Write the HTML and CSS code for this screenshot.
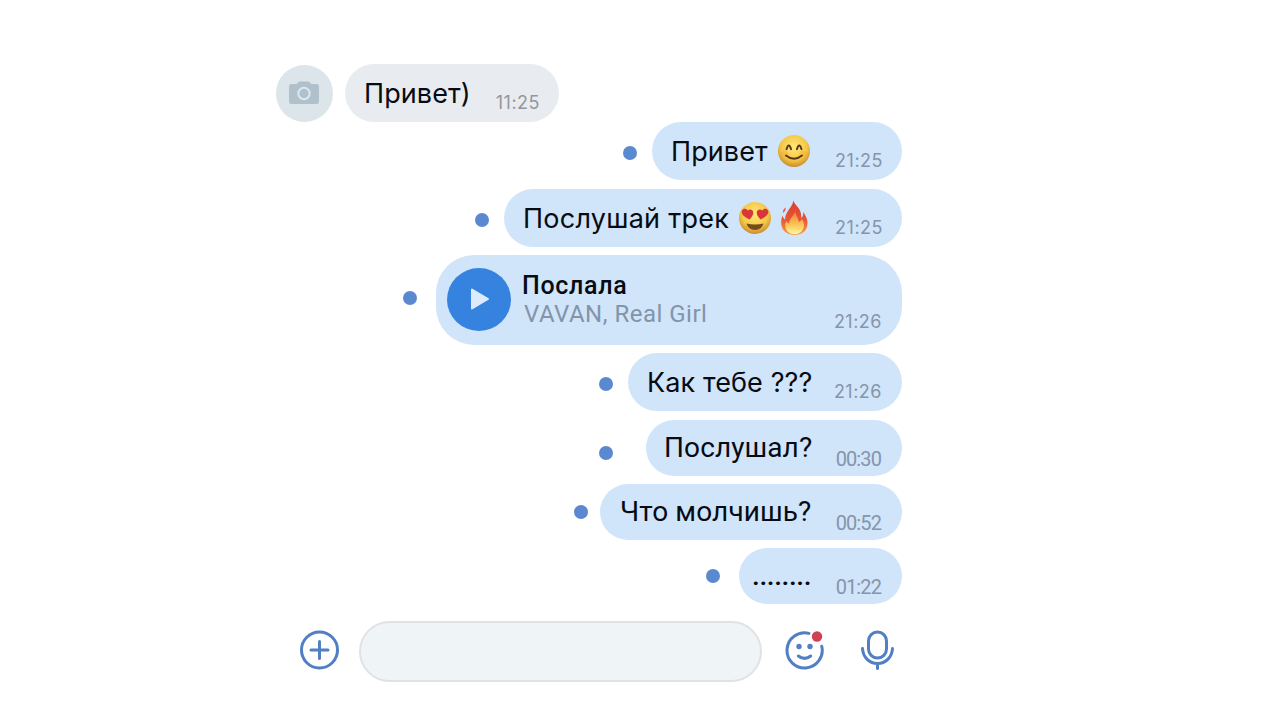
FILE: index.html
```html
<!DOCTYPE html>
<html lang="ru">
<head>
    <meta charset="UTF-8">
    <meta name="viewport" content="width=device-width, initial-scale=1.0">
    <title>Сообщения</title>
    <link rel="stylesheet" href="styles.css">
</head>
<body>
    <main class="chat">
        <div class="message incoming">
            <div class="avatar">
                <svg width="32" height="26" viewBox="0 0 32 26">
                    <path d="M3.500 4H8q1.200 0 2-1.500.8-1 2-1h8q1.200 0 2 1Q22.800 4 24 4h4.500q2.500 0 2.500 2.500v15q0 2.500-2.500 2.500h-25Q1 24 1 21.500v-15Q1 4 3.500 4z" fill="#b0c1cc"/>
                    <circle cx="16" cy="13.500" r="5.700" fill="none" stroke="#dce8ef" stroke-width="2"/>
                </svg>
            </div>
            <div class="bubble hello-in">
                <span class="text">Привет)</span>
                <span class="time">11:25</span>
            </div>
        </div>

        <div class="message">
            <span class="dot"></span>
            <div class="bubble hello-out">
                <span class="text">Привет</span>
                <svg class="emoji" width="34" height="34" viewBox="0 0 34 34">
                    <defs>
                        <radialGradient id="face" cx="50%" cy="38%" r="62%">
                            <stop offset="0" stop-color="#ffe978"/>
                            <stop offset=".65" stop-color="#f5c846"/>
                            <stop offset="1" stop-color="#c98b2c"/>
                        </radialGradient>
                    </defs>
                    <circle cx="17" cy="17" r="16" fill="url(#face)"/>
                    <ellipse cx="7.500" cy="20" rx="4" ry="3" fill="#f4a53b" opacity=".4"/>
                    <ellipse cx="26.500" cy="20" rx="4" ry="3" fill="#f4a53b" opacity=".4"/>
                    <path d="M9.500 15.200q2.300-7.500 4.600 0M19.900 15.200q2.300-7.500 4.600 0M9 21.500q8 6.500 16 0" fill="none" stroke="#573719" stroke-width="1.900" stroke-linecap="round"/>
                </svg>
                <span class="time">21:25</span>
            </div>
        </div>

        <div class="message">
            <span class="dot"></span>
            <div class="bubble listen">
                <span class="text">Послушай трек</span>
                <svg class="emoji" width="34" height="34" viewBox="0 0 34 34">
                    <circle cx="17" cy="17" r="16" fill="url(#face)"/>
                    <path d="M11.500 18.500C6 16 2.500 12.500 4 9.500c1.300-2.500 4.500-2.300 5.700.1 2-2.100 5-1.300 5.500 1.300.5 2.600-1.400 5.100-3.700 7.600z" fill="#d9363c"/>
                    <path d="M22.500 18.500C28 16 31.500 12.500 30 9.500c-1.300-2.500-4.500-2.300-5.700.1-2-2.100-5-1.300-5.500 1.300-.5 2.600 1.400 5.100 3.700 7.600z" fill="#d9363c"/>
                    <path d="M8.500 22.500q8.500 2 17 0-1.700 6.500-8.500 6.500t-8.500-6.500z" fill="#754b1e"/>
                </svg>
                <svg class="fire" width="30" height="36" viewBox="0 0 30 36">
                    <defs>
                        <linearGradient id="flame" x1="0" y1="0" x2="0" y2="1">
                            <stop offset="0" stop-color="#dc3c2d"/>
                            <stop offset=".55" stop-color="#e65636"/>
                            <stop offset="1" stop-color="#f6a044"/>
                        </linearGradient>
                        <linearGradient id="flameCore" x1="0" y1="0" x2="0" y2="1">
                            <stop offset="0" stop-color="#ee7a3a"/>
                            <stop offset=".6" stop-color="#fbc656"/>
                            <stop offset="1" stop-color="#fff6a6"/>
                        </linearGradient>
                    </defs>
                    <path d="M13.500.5c1 4.500 7 7.500 7.500 13.500.2 1.700.2 3 .2 4 1.700-.8 2.300-3.500 1.900-6 3.600 5 5.200 9 4.200 13.500C26 31.500 21.500 35 14.800 35 7 35 2 30.500 1.300 24.500.9 21 1.500 18 2.500 15.500c.6 2 1.300 3.500 2.700 4C5 15 7.500 11.500 10 8c1.700-2.500 3-4.500 3.500-7.500z" fill="url(#flame)"/>
                    <path d="M5.300 7.500c1 2-.5 4-2.300 5.500-.4-2 .6-4 2.300-5.500z" fill="#e25b4a"/>
                    <path d="M15.500 11c-.4 4 2.800 6.500 3.300 11 1.700-.4 2.600-1.600 3-3.200 2.600 3.700 3 7.700 1 10.900-1.700 2.900-4.600 4.500-8.100 4.500-4.700 0-8.400-2.700-9.200-6.700-.5-2.500.1-4.500 1-6.500.5 1.700 1.400 2.500 2.700 2.500-.2-5 4.700-7.500 6.300-12.500z" fill="url(#flameCore)"/>
                </svg>
                <span class="time">21:25</span>
            </div>
        </div>

        <div class="message">
            <span class="dot dot-track"></span>
            <div class="bubble track">
                <div class="play">
                    <svg width="20" height="24" viewBox="0 0 20 24">
                        <path d="M2 2.500v19L18 12z" fill="#dcecfc" stroke="#dcecfc" stroke-width="2" stroke-linejoin="round"/>
                    </svg>
                </div>
                <div class="track-info">
                    <div class="track-title">Послала</div>
                    <div class="track-artist">VAVAN, Real Girl</div>
                </div>
                <span class="time">21:26</span>
            </div>
        </div>

        <div class="message last-seen">
            <span class="dot"></span>
            <div class="bubble how">
                <span class="text">Как тебе ???</span>
                <span class="time">21:26</span>
            </div>
        </div>

        <div class="message">
            <span class="dot dot-listened"></span>
            <div class="bubble small listened">
                <span class="text">Послушал?</span>
                <span class="time">00:30</span>
            </div>
        </div>

        <div class="message">
            <span class="dot dot-silent"></span>
            <div class="bubble small silent">
                <span class="text">Что молчишь?</span>
                <span class="time">00:52</span>
            </div>
        </div>

        <div class="message">
            <span class="dot dot-dots"></span>
            <div class="bubble small dots">
                <span class="text">........</span>
                <span class="time">01:22</span>
            </div>
        </div>

        <div class="composer">
            <svg class="attach" width="40" height="40" viewBox="0 0 40 40" fill="none" stroke="#527fc4" stroke-width="3" stroke-linecap="round">
                <circle cx="19.500" cy="20" r="18"/>
                <path d="M19.500 11.500v17M11 20h17"/>
            </svg>
            <div class="field"></div>
            <svg class="smile" width="40" height="42" viewBox="0 0 40 42">
                <path d="M24 4.400A17.600 17.600 0 1 0 36.700 17.200" fill="none" stroke="#527fc4" stroke-width="3" stroke-linecap="round"/>
                <circle cx="14" cy="17.500" r="2.700" fill="#527fc4"/>
                <circle cx="25" cy="17.500" r="2.700" fill="#527fc4"/>
                <path d="M13.300 27q6.200 4.800 12.400 0" fill="none" stroke="#527fc4" stroke-width="3" stroke-linecap="round"/>
                <circle cx="32" cy="7.500" r="5.200" fill="#cf4153"/>
            </svg>
            <svg class="mic" width="34" height="40" viewBox="0 0 34 40" fill="none" stroke="#527fc4" stroke-width="3" stroke-linecap="round">
                <rect x="7.500" y="2" width="18" height="26" rx="9"/>
                <path d="M1.500 18.500c.5 9 7 15 15 15s14.500-6 15-15M16.500 34v4.500"/>
            </svg>
        </div>
    </main>
</body>
</html>
```

FILE: styles.css
```css
body {
    margin: 0;
    background-color: #fff;
    color: #070b12;
    font-family: Inter, sans-serif;
}
.chat {
    width: 626px;
    height: 656px;
    margin-left: 276px;
    padding-top: 64px;
    overflow: hidden;
}
.message {
    display: flex;
    justify-content: flex-end;
    align-items: center;
    margin-bottom: 8px;
}
.message.incoming {
    justify-content: flex-start;
    margin-bottom: 0;
}
.avatar {
    display: flex;
    align-items: center;
    justify-content: center;
    width: 57px;
    height: 57px;
    margin-right: 12px;
    padding-right: 1px;
    box-sizing: border-box;
    border-radius: 50%;
    background-color: #dce5ea;
}
.bubble {
    display: flex;
    align-items: center;
    box-sizing: border-box;
    height: 58px;
    padding: 0 19px;
    border-radius: 29px;
    background-color: #d0e4fa;
    white-space: nowrap;
}
.text {
    padding-top: 2px;
    font-size: 27px;
    line-height: 56px;
    letter-spacing: 0.1px;
}
.time {
    align-self: flex-end;
    margin-left: auto;
    margin-bottom: 8px;
    color: #8595aa;
    font-size: 18px;
    line-height: 22px;
    letter-spacing: 0.5px;
}
.dot {
    width: 14px;
    height: 14px;
    margin-right: 15px;
    margin-top: 3px;
    border-radius: 50%;
    background-color: #5b89d0;
}
.dot-track {
    margin-right: 19px;
    margin-top: -4px;
}
.dot-listened {
    margin-right: 33px;
    margin-top: 10px;
}
.dot-silent {
    margin-right: 12px;
    margin-top: 0;
}
.dot-dots {
    margin-right: 19px;
    margin-top: 0;
}
.hello-in {
    width: 214px;
    background-color: #e8ebf0;
}
.hello-in .time {
    color: #94979d;
}
.hello-out {
    width: 250px;
}
.message:nth-child(2) {
    margin-bottom: 9px;
}
.emoji {
    margin-left: 9px;
}
.listen {
    width: 398px;
}
.listen .text {
    letter-spacing: 0.25px;
}
.fire {
    margin-left: 8px;
}
.track {
    width: 466px;
    height: 90px;
    padding-left: 11px;
    padding-right: 20px;
    border-radius: 38px;
}
.play {
    display: flex;
    align-items: center;
    justify-content: center;
    width: 64px;
    height: 63px;
    margin-bottom: 2px;
    padding-left: 1px;
    box-sizing: border-box;
    border-radius: 50%;
    background-color: #3682df;
}
.track-info {
    margin-left: 11px;
    font-family: Roboto, sans-serif;
}
.track-title {
    font-size: 25px;
    font-weight: 500;
    line-height: 28px;
    letter-spacing: 0.7px;
}
.track-artist {
    padding-left: 2px;
    color: #8294a9;
    font-size: 24px;
    line-height: 28px;
    letter-spacing: 0.5px;
}
.track .time {
    margin-bottom: 12px;
}
.how {
    width: 274px;
    padding-right: 20px;
}
.last-seen {
    margin-bottom: 9px;
}
.small {
    height: 56px;
    padding-right: 21px;
    font-family: Roboto, sans-serif;
}
.small .text {
    padding-top: 0;
    font-size: 28px;
}
.small .time {
    margin-bottom: 6px;
    font-size: 20px;
    letter-spacing: -0.9px;
}
.listened {
    width: 256px;
    padding-left: 18px;
}
.silent {
    width: 302px;
    padding-left: 20px;
}
.dots {
    width: 163px;
    padding-left: 13px;
}
.dots .text {
    font-weight: 500;
    letter-spacing: -0.4px;
}
.composer {
    display: flex;
    align-items: center;
    margin-top: 17px;
    padding-left: 24px;
}
.attach {
    margin-bottom: 3px;
}
.field {
    box-sizing: border-box;
    width: 403px;
    height: 61px;
    margin-left: 19px;
    border: 2px solid #e0e2e4;
    border-radius: 31px;
    background-color: #eff4f6;
}
.smile {
    margin-left: 23px;
    margin-bottom: 3px;
}
.mic {
    margin-left: 36px;
    margin-bottom: 3px;
}
```
